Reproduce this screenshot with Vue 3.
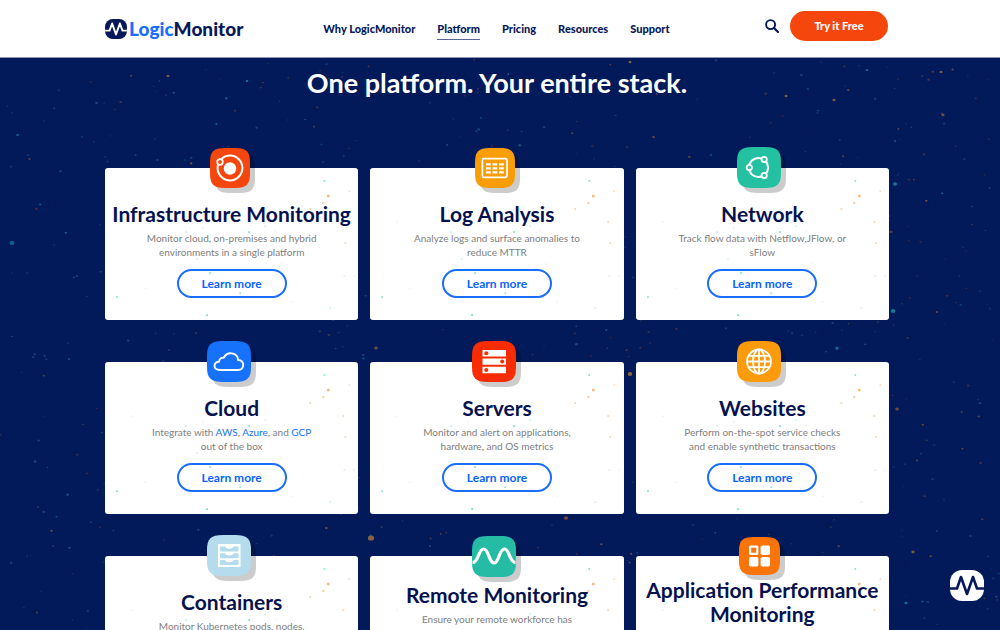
<script setup>
const nav = ['Why LogicMonitor', 'Platform', 'Pricing', 'Resources', 'Support']
const active = 'Platform'

const wide = { x: 0, y: 0, w: 44, h: 41 }
const small = { x: 3, y: 1, w: 40, h: 40 }

// Each description line is a list of parts; an object part is a link
const cards = [
  { title: 'Infrastructure Monitoring', icon: 'orbit', color: '#f4460d', tile: small, lines: [['Monitor cloud, on-premises and hybrid'], ['environments in a single platform']] },
  { title: 'Log Analysis', icon: 'table', color: '#f99d07', tile: small, lines: [['Analyze logs and surface anomalies to'], ['reduce MTTR']] },
  { title: 'Network', icon: 'network', color: '#23c0a1', tile: wide, lines: [['Track flow data with Netflow,JFlow, or'], ['sFlow']] },
  { title: 'Cloud', icon: 'cloud', color: '#1672fb', tile: wide, lines: [['Integrate with ', { label: 'AWS' }, ', ', { label: 'Azure' }, ', and ', { label: 'GCP' }], ['out of the box']] },
  { title: 'Servers', icon: 'servers', color: '#f72c02', tile: wide, lines: [['Monitor and alert on applications,'], ['hardware, and OS metrics']] },
  { title: 'Websites', icon: 'globe', color: '#fb9a0b', tile: wide, lines: [['Perform on-the-spot service checks'], ['and enable synthetic transactions']] },
  { title: 'Containers', icon: 'drawers', color: '#b4dcec', tile: wide, lines: [['Monitor Kubernetes pods, nodes,'], ['and containers']] },
  { title: 'Remote Monitoring', icon: 'wave', color: '#25bba5', tile: { x: 0, y: 1, w: 44, h: 41 }, lines: [['Ensure your remote workforce has'], ['access to the tools they'], ['need']] },
  { title: 'Application Performance Monitoring', icon: 'apps', color: '#fb7408', tile: { x: 2, y: 2, w: 41, h: 38 }, lines: [['Trace every request across'], ['your applications']] }
]

// Rounded "squircle" outline for an icon tile
function squircle({ x, y, w, h }) {
  const a = w * 0.36, b = h * 0.36
  const p = w * 0.09, q = h * 0.09
  const r = x + w, t = y + h
  return `M${x + a} ${y}H${r - a}C${r - p} ${y} ${r} ${y + q} ${r} ${y + b}` +
    `V${t - b}C${r} ${t - q} ${r - p} ${t} ${r - a} ${t}` +
    `H${x + a}C${x + p} ${t} ${x} ${t - q} ${x} ${t - b}` +
    `V${y + b}C${x} ${y + q} ${x + p} ${y} ${x + a} ${y}Z`
}

// Confetti inside a card: x, y, radius, colour, opacity
const T = '#35cdb0', O = '#f7a14a', P = '#f3a58c'
const cardSpecks = [
  [219, 13, 1, T, 0.6], [223, 28, 1.5, O, 0.7], [218, 35, 1.2, O, 0.5], [244, 23, 0.9, O, 0.4],
  [205, 41, 1, O, 0.5], [238, 54, 1.2, O, 0.35], [240, 75, 1, O, 0.4], [144, 64, 1.1, T, 0.6],
  [81, 64, 0.9, T, 0.4], [105, 105, 1.1, T, 0.5], [135, 125, 1, T, 0.5], [12, 129, 1.1, T, 0.5],
  [102, 147, 1.1, T, 0.6], [160, 58, 0.9, T, 0.3], [92, 91, 0.8, T, 0.3], [27, 54, 0.9, T, 0.15],
  [98, 60, 0.8, P, 0.3], [225, 140, 0.9, T, 0.25], [239, 108, 0.9, P, 0.3], [187, 134, 0.8, P, 0.2],
  [170, 63, 0.8, P, 0.25], [176, 96, 0.8, P, 0.25], [249, 108, 0.8, T, 0.2], [40, 120, 0.8, P, 0.2]
]

// Confetti over the navy field
const seeds = []
let s = 20117
const rnd = () => (s = (s * 16807) % 2147483647) / 2147483647
const tones = ['#b86a2c', '#8b6a45', '#2a6f9e', '#1e8f9c', '#3c5c98', '#8a4038']
for (let i = 0; i < 900; i++) {
  seeds.push([rnd() * 1000, rnd() * 700, 0.5 + rnd() * 0.7, tones[Math.floor(rnd() * 6)], 0.2 + rnd() * 0.45])
}
seeds.push(
  [371, 480, 2.6, '#a8733c', 0.8], [630, 316, 1.9, '#b57a30', 0.8], [893, 253, 1.9, '#16939c', 0.8],
  [895, 126, 1.7, '#16939c', 0.8], [12, 185, 2, '#16839c', 0.7], [566, 460, 1.8, '#b0532a', 0.7],
  [630, 4, 1.2, '#a8733c', 0.8], [786, 38, 1.3, '#a8733c', 0.7], [941, 14, 1.3, '#a8733c', 0.7],
  [834, 42, 1.3, '#b5702f', 0.7], [943, 57, 1.3, '#a8733c', 0.6], [376, 290, 1.6, '#b5702f', 0.6],
  [913, 494, 1.4, '#a8733c', 0.7], [247, 23, 1, '#1e9fac', 0.8], [837, 290, 1.4, '#1e8f9c', 0.6],
  [897, 351, 1.5, '#a85c2c', 0.7], [906, 545, 1.3, '#16939c', 0.7], [168, 18, 1.3, '#a8733c', 0.7]
)
</script>

<template>
  <div class="page">
    <header class="header">
      <a class="logo" href="#" aria-label="LogicMonitor">
        <svg class="logo-mark" viewBox="0 0 34 31" aria-hidden="true">
          <rect width="34" height="31" rx="12" fill="#06195a" />
          <path d="M0 18H7L11 7L17 24L23 7L27 18H34" fill="none" stroke="#fff" stroke-width="3" stroke-linejoin="round" />
        </svg>
        <span class="logo-text"><span class="logo-blue">Logic</span>Monitor</span>
      </a>
      <nav class="nav">
        <a v-for="n in nav" :key="n" href="#" :class="{ active: n === active }">{{ n }}</a>
      </nav>
      <div class="actions">
        <button class="search" type="button" aria-label="Search">
          <svg viewBox="0 0 14 14" aria-hidden="true">
            <circle cx="5.6" cy="5.6" r="4.5" fill="none" stroke="#06195a" stroke-width="1.9" />
            <path d="M9 9L13 13" stroke="#06195a" stroke-width="2.2" stroke-linecap="round" />
          </svg>
        </button>
        <a class="try" href="#">Try it Free</a>
      </div>
    </header>

    <main class="stack">
      <svg class="specks" viewBox="0 0 1000 700" preserveAspectRatio="xMidYMin slice" aria-hidden="true">
        <ellipse v-for="(d, i) in seeds" :key="i" :cx="d[0]" :cy="d[1]" :rx="d[2] * 1.2" :ry="d[2]" :fill="d[3]" :opacity="d[4]" />
      </svg>
      <h1>One platform. Your entire stack.</h1>
      <div class="grid">
        <article v-for="c in cards" :key="c.title" class="card">
          <svg class="card-specks" viewBox="0 0 253 152" preserveAspectRatio="xMidYMin slice" aria-hidden="true">
            <circle v-for="(d, i) in cardSpecks" :key="i" :cx="d[0]" :cy="d[1]" :r="d[2]" :fill="d[3]" :opacity="d[4]" />
          </svg>
          <svg class="icon" viewBox="0 0 50 47" aria-hidden="true">
            <path :d="squircle(c.tile)" transform="translate(5 5)" fill="#000" opacity="0.2" />
            <path :d="squircle(c.tile)" :fill="c.color" />
            <g v-if="c.icon === 'orbit'" fill="none" stroke="#fff">
              <circle cx="23" cy="21.5" r="6.2" fill="#fff" stroke="none" />
              <circle cx="23" cy="21" r="12.4" stroke-width="2" />
              <circle cx="13" cy="15" r="2.8" :fill="c.color" stroke-width="1.8" />
            </g>
            <g v-else-if="c.icon === 'table'" fill="none" stroke="#fff">
              <rect x="10.4" y="11.6" width="24.6" height="18.8" rx="1.6" stroke-width="1.7" />
              <path d="M14 17.4H31.8M14 21.4H31.8M14 25.4H31.8" stroke-width="2.2" stroke-dasharray="4.8 1.7" />
            </g>
            <g v-else-if="c.icon === 'network'" :fill="c.color" stroke="#fff" stroke-width="1.8">
              <circle cx="21.5" cy="20.5" r="9.6" fill="none" stroke-width="2" />
              <circle cx="12.3" cy="20.5" r="2.6" />
              <circle cx="27.2" cy="12.4" r="2.6" />
              <circle cx="27.2" cy="28.4" r="2.6" />
            </g>
            <path v-else-if="c.icon === 'cloud'" d="M13 29C9.6 29 7.5 27.2 7.5 24.8C7.5 22.3 9.5 20.6 12 20.7C12.2 17.8 14.3 16.2 16.8 16.7C18.4 13.5 21 12 24 12.2C28.6 12.4 31.2 15.7 31 19C34 18.8 36.2 20.9 36.2 23.8C36.2 26.8 34.2 29 31 29Z" fill="none" stroke="#fff" stroke-width="1.9" stroke-linejoin="round" />
            <g v-else-if="c.icon === 'servers'" fill="#fff">
              <path d="M10.5 9H34V15.4H10.5ZM10.5 17.4H34V23.8H10.5ZM10.5 25.8H34V32.2H10.5Z" />
              <g :fill="c.color">
                <circle cx="14.3" cy="12.2" r="2" />
                <circle cx="30.2" cy="20.6" r="2" />
                <circle cx="14.3" cy="29" r="2" />
              </g>
            </g>
            <g v-else-if="c.icon === 'globe'" fill="none" stroke="#fff" stroke-width="1.8">
              <circle cx="22" cy="20.5" r="12" />
              <ellipse cx="22" cy="20.5" rx="6" ry="12" />
              <path d="M22 8.5V32.5M10 20.5H34M11.6 14.8H32.4M11.6 26.2H32.4" />
            </g>
            <g v-else-if="c.icon === 'drawers'">
              <rect x="11" y="9" width="22.5" height="23" fill="#fff" />
              <g :fill="c.color">
                <path d="M13 11.4H18C19 14.4 25.5 14.4 26.5 11.4H31.5V16.4H13Z" />
                <path d="M13 18.2H18C19 21.2 25.5 21.2 26.5 18.2H31.5V23.2H13Z" />
                <path d="M13 25H18C19 28 25.5 28 26.5 25H31.5V30H13Z" />
              </g>
            </g>
            <path v-else-if="c.icon === 'wave'" d="M0.5 27.5C6.5 27.5 6.5 14 11.5 14C17 14 16.8 28 22 28C27.2 28 27 14 32.5 14C37.5 14 37.5 27.5 43.5 27.5" fill="none" stroke="#fff" stroke-width="3.2" />
            <g v-else fill="#fff">
              <rect x="12" y="10.5" width="9.4" height="9.4" rx="1.6" />
              <rect x="14.2" y="12.7" width="5" height="5" rx="0.5" :fill="c.color" />
              <rect x="23.6" y="10.5" width="9.4" height="9.4" rx="1.6" />
              <rect x="12" y="22" width="9.4" height="9.4" rx="1.6" />
              <rect x="23.6" y="22" width="9.4" height="9.4" rx="1.6" />
            </g>
          </svg>
          <h2>{{ c.title }}</h2>
          <p>
            <span v-for="(line, i) in c.lines" :key="i" class="line"><template v-for="(part, j) in line" :key="j"><a v-if="part.label" href="#">{{ part.label }}</a><template v-else>{{ part }}</template></template></span>
          </p>
          <a class="more" href="#">Learn more</a>
        </article>
      </div>
    </main>

    <button class="chat" type="button" aria-label="Open chat">
      <svg viewBox="0 0 34 31" aria-hidden="true">
        <rect width="34" height="31" rx="12" fill="#fff" />
        <path d="M0 18.5H7L11 7L17 24L23 7L27 18.5H34" fill="none" stroke="#06195a" stroke-width="2.6" stroke-linejoin="round" />
      </svg>
    </button>
  </div>
</template>

<style>
html { scrollbar-width: none; }
body { background: #021a5a; }
</style>

<style scoped>
.page {
  font-family: Lato, "Liberation Sans", sans-serif;
  color: #06124f;
}
a { text-decoration: none; color: inherit; }
button { border: 0; padding: 0; background: none; cursor: pointer; }
svg { display: block; }

.header {
  position: sticky;
  top: 0;
  z-index: 5;
  display: grid;
  grid-template-columns: 1fr auto 1fr;
  align-items: start;
  box-sizing: border-box;
  height: 58px;
  padding: 11px 112px 0 105px;
  background: #fff;
  border-bottom: 1px solid #9098b4;
}
.logo { display: flex; align-items: center; gap: 2px; padding-top: 8px; }
.logo-mark { width: 22px; height: 20px; }
.logo-text { font-size: 19px; line-height: 20px; font-weight: 900; color: #06195a; }
.logo-blue { color: #1a6dff; }
.nav { display: flex; gap: 22px; font-size: 11px; line-height: 20px; font-weight: 900; padding-top: 8px; color: #06195a; }
.nav a { border-bottom: 1px solid transparent; white-space: nowrap; }
.nav .active { border-bottom-color: #5a6796; }
.actions { display: flex; justify-content: flex-end; align-items: center; gap: 11px; }
.search svg { width: 14px; height: 14px; }
.try {
  width: 98px;
  line-height: 30px;
  border-radius: 15px;
  background: #f4460d;
  color: #fff;
  font-size: 11px;
  font-weight: 900;
  text-align: center;
}

.stack {
  position: relative;
  overflow: hidden;
  padding: 7px 111px 42px 105px;
  background: #021a5a;
}
.specks { position: absolute; inset: 0; width: 100%; height: 100%; }
h1 {
  position: relative;
  margin: 0 0 67px;
  font-size: 27px;
  line-height: 36px;
  font-weight: 700;
  text-align: center;
  color: #fff;
}
.grid { display: grid; grid-template-columns: repeat(3, 1fr); gap: 42px 12px; }
.card {
  position: relative;
  display: flex;
  flex-direction: column;
  align-items: center;
  justify-content: center;
  box-sizing: border-box;
  min-height: 152px;
  padding-top: 12px;
  border-radius: 3px;
  background: #fff;
  text-align: center;
}
.card-specks { position: absolute; inset: 0; width: 100%; height: 100%; }
.icon { position: absolute; top: -21px; left: calc(50% - 25px); width: 50px; height: 47px; }
h2 { position: relative; margin: 0; font-size: 21px; line-height: 24px; font-weight: 700; }
p { position: relative; margin: 5px 0 10px; font-size: 10px; line-height: 14px; color: #808080; }
p a { color: #1672fb; }
.line { display: block; }
.more {
  position: relative;
  box-sizing: border-box;
  width: 110px;
  border: 2px solid #1a6dff;
  border-radius: 15px;
  font-size: 12px;
  line-height: 25px;
  font-weight: 700;
  color: #0a64ff;
}
.chat { position: fixed; right: 16px; bottom: 29px; z-index: 6; }
.chat svg { width: 34px; height: 31px; }
</style>
